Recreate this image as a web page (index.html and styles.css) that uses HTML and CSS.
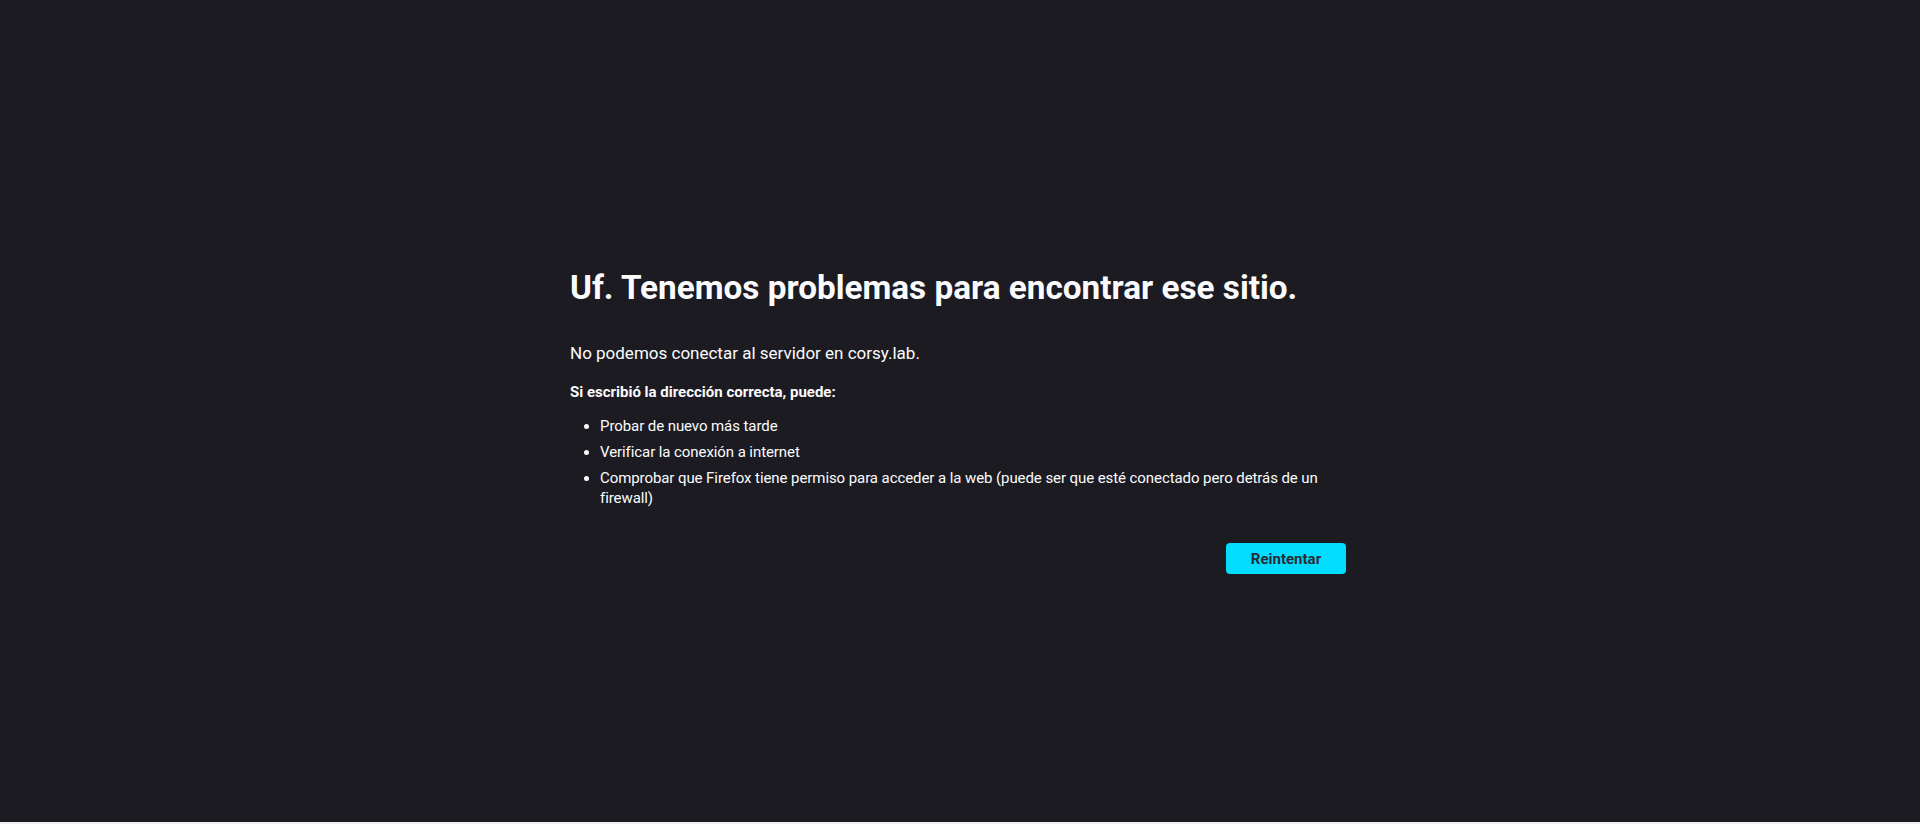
FILE: index.html
```html
<!DOCTYPE html>
<html lang="es">
<head>
<meta charset="utf-8">
<title>Problema al cargar la página</title>
<link rel="stylesheet" href="styles.css">
</head>
<body>
<div class="page">
  <main class="container">
    <h1 class="title">Uf. Tenemos problemas para encontrar ese sitio.</h1>
    <p class="intro">No podemos conectar al servidor en corsy.lab.</p>
    <p class="hint">Si escribió la dirección correcta, puede:</p>
    <ul class="tips">
      <li>Probar de nuevo más tarde</li>
      <li>Verificar la conexión a internet</li>
      <li>Comprobar que Firefox tiene permiso para acceder a la web (puede ser que esté conectado pero detrás de un firewall)</li>
    </ul>
    <div class="actions">
      <button class="retry" type="button">Reintentar</button>
    </div>
  </main>
</div>
</body>
</html>
```
FILE: styles.css
```css
html {
  background: #f0f0f4;
}
body {
  margin: 0;
  font-family: Roboto, "Noto Sans", sans-serif;
  color: #fbfbfe;
}
.page {
  height: 822px;
  background: #1c1b22;
  padding-top: 268px;
  box-sizing: border-box;
}
.container {
  width: 776px;
  padding-right: 4px;
  margin: 0 auto;
}
.title {
  margin: 0;
  font-size: 33.3px;
  line-height: 40px;
  font-weight: 700;
}
.intro {
  margin: 33px 0 0;
  font-size: 17px;
  line-height: 24px;
}
.hint {
  margin: 17px 0 0;
  font-size: 15px;
  line-height: 20px;
  font-weight: 700;
}
.tips {
  margin: 14px 0 0;
  padding-left: 30px;
  font-size: 15px;
  line-height: 20px;
  letter-spacing: -0.08px;
}
.tips li {
  margin-bottom: 6px;
}
.tips li:last-child {
  margin-bottom: 0;
}
.actions {
  display: flex;
  justify-content: flex-end;
  margin-top: 35px;
}
.retry {
  width: 120px;
  height: 31px;
  border: 0;
  border-radius: 4px;
  background: #00ddff;
  color: #2b2a33;
  font-family: inherit;
  font-size: 15px;
  font-weight: 700;
  padding: 0;
}
```
